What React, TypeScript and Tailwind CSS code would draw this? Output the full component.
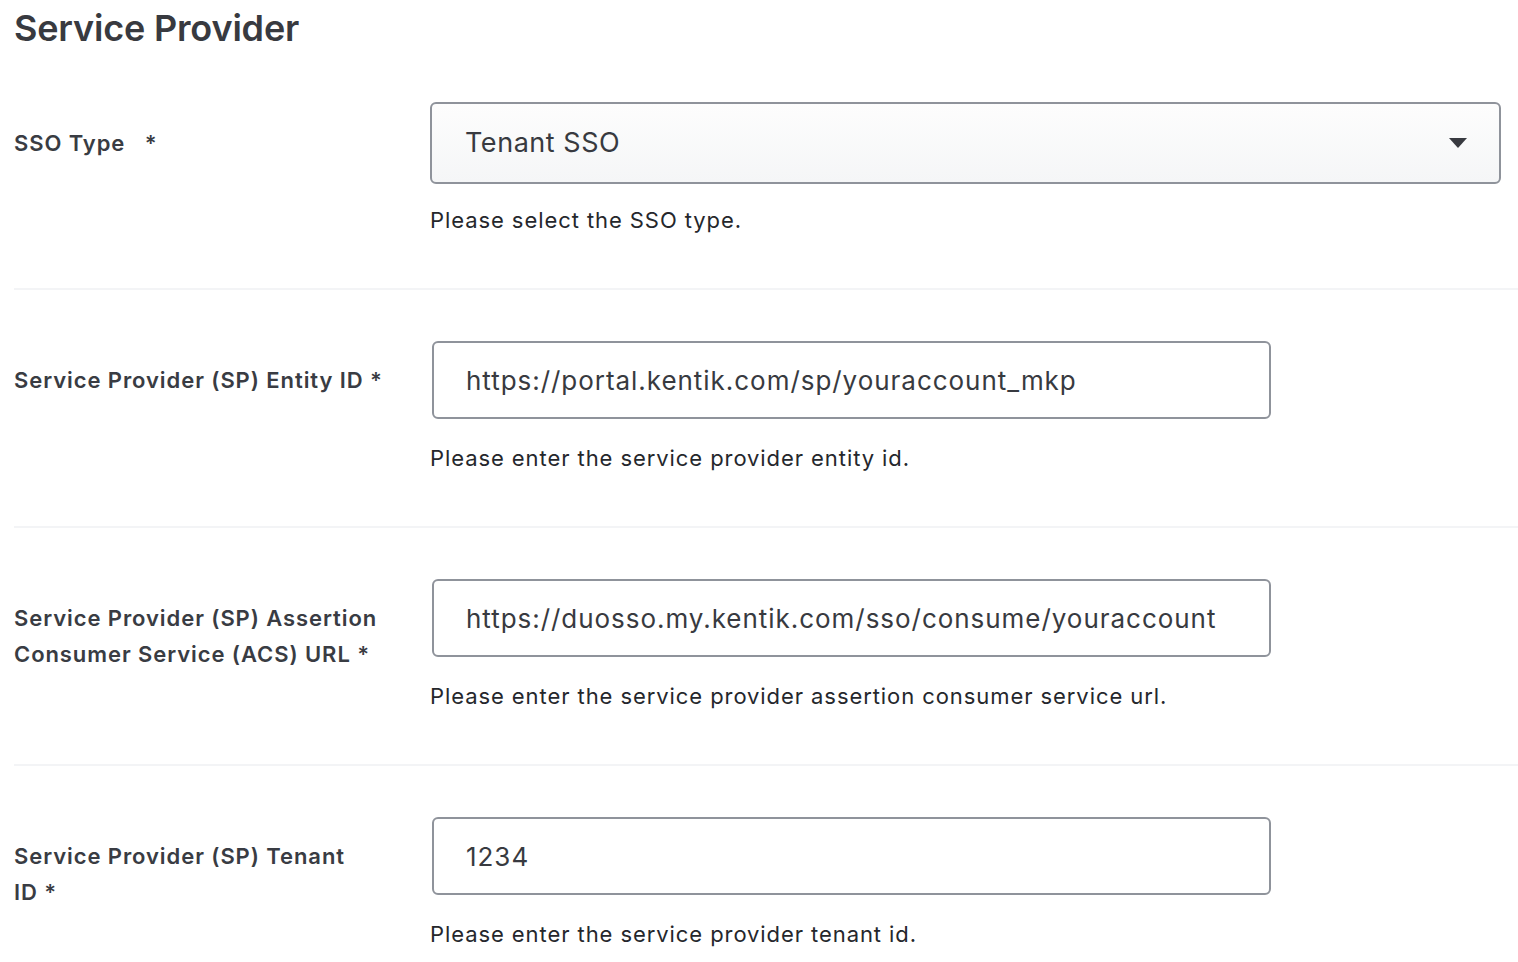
import React from "react";

function Row({
  label,
  children,
  helper,
  last,
}: {
  label: React.ReactNode;
  children: React.ReactNode;
  helper: string;
  last?: boolean;
}) {
  return (
    <div
      className={
        "flex pr-[17px] " +
        (last ? "pt-[51px] pb-[10px]" : "pt-[51px] pb-[52px] border-b-2 border-[#f3f4f6]")
      }
    >
      <div className="w-[416px] shrink-0 pr-[36px] pt-[21px] text-[22px] leading-[36px] font-semibold tracking-[0.042em] text-[#393c43]">
        {label}
      </div>
      <div className="flex-1 flex flex-col">
        {children}
        <div className="mt-[23px] text-[22px] leading-[32px] tracking-[0.042em] text-[#25272c]">{helper}</div>
      </div>
    </div>
  );
}

function TextInput({ value }: { value: string }) {
  return (
    <div className="ml-[2px] w-[839px] h-[78px] rounded-[6px] border-2 border-[#8f939b] bg-white flex items-center pl-[32px] text-[26px] tracking-[0.037em] text-[#383a40]">
      {value}
    </div>
  );
}

export default function App() {
  return (
    <div
      className="w-[1518px] h-[962px] bg-white overflow-hidden pl-[14px]"
      style={{ fontFamily: "Inter, 'Noto Sans', sans-serif" }}
    >
      <h1 className="text-[36px] leading-[44px] font-semibold text-[#383a40] pt-[6px] tracking-[-0.005em]">Service Provider</h1>

      <div className="flex pr-[17px] pt-[52px] pb-[52px] border-b-2 border-[#f3f4f6]">
        <div className="w-[416px] shrink-0 pt-[23px] text-[22px] leading-[36px] font-semibold tracking-[0.042em] text-[#393c43] whitespace-pre">
          {"SSO Type   *"}
        </div>
        <div className="flex-1 flex flex-col">
          <div className="h-[82px] rounded-[6px] border-2 border-[#8f939b] bg-gradient-to-b from-[#fdfdfd] to-[#f5f6f7] flex items-center justify-between pl-[33px] pr-[32px] text-[27px] tracking-[0.02em] text-[#383a40]">
            <span>Tenant SSO</span>
            <svg width="18" height="10" viewBox="0 0 18 10">
              <path d="M0 0 L18 0 L9 10 Z" fill="#383a40" />
            </svg>
          </div>
          <div className="mt-[20px] text-[22px] leading-[32px] tracking-[0.042em] text-[#25272c]">Please select the SSO type.</div>
        </div>
      </div>

      <Row label="Service Provider (SP) Entity ID *" helper="Please enter the service provider entity id.">
        <TextInput value="https://portal.kentik.com/sp/youraccount_mkp" />
      </Row>

      <Row
        label="Service Provider (SP) Assertion Consumer Service (ACS) URL *"
        helper="Please enter the service provider assertion consumer service url."
      >
        <TextInput value="https://duosso.my.kentik.com/sso/consume/youraccount" />
      </Row>

      <Row
        label={<>Service Provider (SP) Tenant<br />ID *</>}
        helper="Please enter the service provider tenant id."
        last
      >
        <TextInput value="1234" />
      </Row>
    </div>
  );
}
